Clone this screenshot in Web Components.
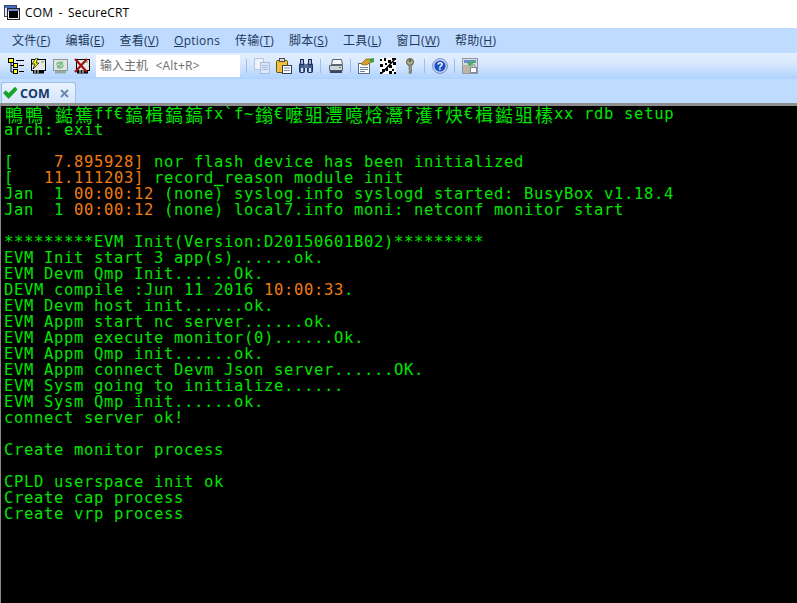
<!DOCTYPE html>
<html>
<head>
<meta charset="utf-8">
<title>COM - SecureCRT</title>
<style>
    html, body { margin: 0; padding: 0; height: 100%; overflow: hidden; background: #000; }
    body { display: flex; flex-direction: column; height: 603px; }
    term-screen { flex: 1; }
</style>
</head>
<body>
<title-bar>COM - SecureCRT</title-bar>
<menu-bar></menu-bar>
<tool-bar></tool-bar>
<tab-strip>COM</tab-strip>
<term-screen></term-screen>

<script>
const UI_FONT = `"Open Sans", "Noto Sans", "Noto Sans CJK SC", sans-serif`;

class TitleBar extends HTMLElement {
    constructor() {
        super();
        this.attachShadow({mode: 'open'}).innerHTML = `
            <style>
                :host {
                    display: flex;
                    align-items: center;
                    gap: 5px;
                    height: 28px;
                    box-sizing: border-box;
                    padding: 0 0 3px 4px;
                    background: #fff;
                    color: #000;
                    font: 12px ${UI_FONT};
                    word-spacing: 2px;
                    letter-spacing: .2px;
                }
                svg { display: block; }
            </style>
            <svg width="16" height="16" viewBox="0 0 16 16">
                <rect x=".5" y=".5" width="12" height="11" fill="#dfe6f2" stroke="#33456e"/>
                <rect x="1" y="1" width="11" height="2" fill="#4a6fb8"/>
                <rect x="3.5" y="3.5" width="12" height="11" fill="#eee" stroke="#222"/>
                <rect x="4" y="4" width="11" height="2" fill="#6c8ccc"/>
                <rect x="5" y="6" width="9" height="7" fill="#000"/>
            </svg>
            <span><slot></slot></span>
        `;
    }
}

class MenuBar extends HTMLElement {
    constructor() {
        super();
        const items = [
            ['文件(', 'F', ')'], ['编辑(', 'E', ')'], ['查看(', 'V', ')'], ['', 'O', 'ptions'],
            ['传输(', 'T', ')'], ['脚本(', 'S', ')'], ['工具(', 'L', ')'], ['窗口(', 'W', ')'], ['帮助(', 'H', ')']
        ];
        this.attachShadow({mode: 'open'}).innerHTML = `
            <style>
                :host {
                    display: flex;
                    align-items: center;
                    gap: 15px;
                    height: 25px;
                    box-sizing: border-box;
                    padding: 0 0 1px 12px;
                    background: #bfdbff;
                    color: #1e395b;
                    font: 12px ${UI_FONT};
                    letter-spacing: .25px;
                }
                u { text-underline-offset: 1px; }
            </style>
            ${items.map(i => `<span>${i[0]}<u>${i[1]}</u>${i[2]}</span>`).join('')}
        `;
    }
}

class ToolIcon extends HTMLElement {
    constructor() {
        super();
        this.attachShadow({mode: 'open'}).innerHTML = `
            <style>
                :host { display: block; width: 16px; height: 16px; flex: none; }
                svg { display: block; }
            </style>
            <svg width="16" height="16" viewBox="0 0 16 16"></svg>
        `;
    }
    set shape(markup) {
        this.shadowRoot.querySelector('svg').innerHTML = markup;
    }
}
customElements.define('tool-icon', ToolIcon);

const ICONS = {
    sessions: `<rect x=".5" y=".5" width="5" height="4" fill="#ff0" stroke="#000"/><rect x="5.5" y="5.5" width="4" height="4" fill="#ff0" stroke="#000"/><rect x="5.5" y="11.5" width="4" height="4" fill="#ff0" stroke="#000"/><path d="M3 5v9h2M3 7.5h2M8 2.5h8M11 7.5h5M11 13.5h5" stroke="#000" fill="none"/>`,
    quick: `<rect x="1.5" y="1.5" width="14" height="11" fill="#e8e8e8" stroke="#000"/><path d="M6 0L2 6h3L3 11l6-6H6l2-5z" fill="#ff0" stroke="#000" stroke-width=".7"/><path d="M11 4h3" stroke="#3b3"/><path d="M3 13h11v2.5H3z" fill="#000"/><path d="M5 12v3M8 12v3" stroke="#fff"/>`,
    reconnect: `<rect x="1.5" y="1.5" width="14" height="11" fill="#dfe5e2" stroke="#8a9a94"/><path d="M4 7a4 4 0 0 1 6-3l1-1v4H7l1-1a2.5 2.5 0 0 0-3 1zM12 7a4 4 0 0 1-6 3l-1 1V7h4L8 8a2.5 2.5 0 0 0 3-1z" fill="#7cc08a"/><path d="M3 13h11v2.5H3z" fill="#9aa8a2"/>`,
    disconnect: `<rect x="2.5" y="1.5" width="13" height="11" fill="#e8e8e8" stroke="#000"/><path d="M11 4h3" stroke="#3b3"/><path d="M3 13h11v2.5H3z" fill="#000"/><path d="M6 12v3M9 12v3" stroke="#fff"/><path d="M1 1l12 13M13 1L1 14" stroke="#a01010" stroke-width="2.2"/>`,
    copy: `<rect x=".5" y=".5" width="9" height="11" fill="#eef3fb" stroke="#b4c4dc"/><rect x="6.5" y="4.5" width="9" height="11" fill="#dbe6f6" stroke="#a9bcdb"/><path d="M8 7.5h6M8 9.5h6M8 11.5h6" stroke="#a9bcdb"/>`,
    paste: `<rect x=".5" y="2.5" width="11" height="12" rx="1" fill="#f0bf3c" stroke="#6b5212"/><rect x="3.5" y=".5" width="5" height="3" fill="#d8dde6" stroke="#4a4a4a"/><rect x="6.5" y="7.5" width="9" height="8" fill="#fff" stroke="#34405a"/><path d="M8 10h6M8 12.5h6" stroke="#7b8aa8"/>`,
    find: `<rect x="1.5" y="5.5" width="5" height="9" rx="1" fill="#3f5c94" stroke="#1e2f55"/><rect x="9.5" y="5.5" width="5" height="9" rx="1" fill="#3f5c94" stroke="#1e2f55"/><rect x="2.5" y="1.5" width="3" height="5" fill="#9fb4d8" stroke="#1e2f55"/><rect x="10.5" y="1.5" width="3" height="5" fill="#9fb4d8" stroke="#1e2f55"/><rect x="6" y="6" width="4" height="4" fill="#5b6f96"/><rect x="3" y="10" width="2" height="4" fill="#d6e0f2"/><rect x="11" y="10" width="2" height="4" fill="#d6e0f2"/>`,
    print: `<path d="M4.5 1.5h9l1 5h-11z" fill="#f4f6f8" stroke="#5c6672"/><path d="M1.5 7.5h13v5h-13z" fill="#cdd3da" stroke="#5c6672"/><path d="M2 12.5h12v2.5H2z" fill="#3c4654"/><path d="M3 7h9" stroke="#5c6672"/><rect x="11" y="9" width="2" height="1" fill="#3a3"/>`,
    options: `<rect x=".5" y="5.5" width="11" height="10" fill="#fff" stroke="#5a6c88"/><path d="M2 9.5h8M2 11.5h8M2 13.5h5" stroke="#6f85a8"/><path d="M3 6l5-5h5l1 2-5 4H5z" fill="#d8a028" stroke="#6a4e10" stroke-width=".6"/><path d="M11 1l5-1v4l-3 1z" fill="#3aa040"/>`,
    map: `<rect x="0" y="0" width="16" height="16" fill="#fff"/><path d="M0 1h2v2H0zM4 0h2v3H4zM0 6h3v3H0zM5 5h2v2H5zM8 2h3v3H8zM12 0h4v2h-4zM13 4h3v3h-3zM9 7h3v3H9zM2 11h3v3H2zM6 10h2v3H6zM12 11h2v2h-2zM0 14h2v2H0zM9 13h3v3H9zM14 14h2v2h-2z" fill="#000"/><path d="M2 15L15 1" stroke="#000" stroke-width="1.5"/>`,
    key: `<circle cx="8" cy="4" r="3.5" fill="#a6ab88" stroke="#5a5e48"/><rect x="6.8" y="1.5" width="2.4" height="2" fill="#4d5040"/><path d="M7 7h2.5v8L8 16l-1-1v-1.5h1V12H7z" fill="#9a9f80" stroke="#5a5e48" stroke-width=".6"/>`,
    help: `<circle cx="8" cy="8" r="7.4" fill="#cfdcf4" stroke="#6f8cc4"/><circle cx="8" cy="8" r="5.6" fill="#1d4fc4"/><text x="8" y="11.6" text-anchor="middle" font-family="Liberation Sans, sans-serif" font-weight="700" font-size="10.5" fill="#fff">?</text>`,
    lock: `<rect x=".5" y=".5" width="15" height="15" fill="#d9dde2" stroke="#8f98a4"/><rect x="2" y="2" width="12" height="3" fill="#6b90c8"/><rect x="1" y="7" width="7" height="8" fill="#c0b4a6"/><path d="M6 5l2 2 4-4" stroke="#3fb64a" stroke-width="2" fill="none"/><rect x="8.5" y="9.5" width="6" height="5" fill="#fff" stroke="#808890"/><path d="M10 9.5V8a1.5 1.5 0 0 1 3 0v1.5" fill="none" stroke="#808890"/>`
};

class ToolBar extends HTMLElement {
    constructor() {
        super();
        this.attachShadow({mode: 'open'}).innerHTML = `
            <style>
                :host {
                    display: flex;
                    align-items: center;
                    height: 26px;
                    padding-left: 8px;
                    background: linear-gradient(#e3efff 0%, #dbe9fe 35%, #afd2ff 100%);
                    font: 12px ${UI_FONT};
                }
                .host-box {
                    width: 144px;
                    height: 22px;
                    box-sizing: border-box;
                    margin: 0 6px 0 0;
                    padding-left: 4px;
                    line-height: 21px;
                    background: #fff;
                    color: #6d6d6d;
                    white-space: pre;
                }
                .host-box span { letter-spacing: .2px; margin-left: 1px; }
                .sep { width: 1px; height: 14px; flex: none; background: #9ebfe4; }
                .group { display: flex; align-items: center; gap: 6px; margin: 0 6px 0 7px; }
                .first { display: flex; gap: 6px; margin-right: 6px; }
            </style>
            <div class="first" data-icons="sessions quick reconnect disconnect"></div>
            <div class="host-box">输入主机 <span> &lt;Alt+R&gt;</span></div>
            <div class="sep"></div>
            <div class="group" data-icons="copy paste find"></div>
            <div class="sep"></div>
            <div class="group" data-icons="print"></div>
            <div class="sep"></div>
            <div class="group" data-icons="options map key"></div>
            <div class="sep"></div>
            <div class="group" data-icons="help"></div>
            <div class="sep"></div>
            <div class="group" data-icons="lock"></div>
        `;
        this.shadowRoot.querySelectorAll('[data-icons]').forEach(box => {
            box.dataset.icons.split(' ').forEach(name => {
                const icon = document.createElement('tool-icon');
                icon.shape = ICONS[name];
                box.appendChild(icon);
            });
        });
    }
}

class TabStrip extends HTMLElement {
    constructor() {
        super();
        this.attachShadow({mode: 'open'}).innerHTML = `
            <style>
                :host {
                    display: flex;
                    align-items: flex-end;
                    height: 27px;
                    box-sizing: border-box;
                    padding-left: 1px;
                    background: #bfdbff;
                    border-bottom: 3px solid;
                    border-image: linear-gradient(#f0f6ff 0 33%, #dfe3e8 33% 66%, #8f8f8f 66%) 3;
                }
                .tab {
                    display: flex;
                    align-items: center;
                    width: 75px;
                    height: 21px;
                    box-sizing: border-box;
                    padding: 0 6px 0 1px;
                    gap: 2px;
                    background: linear-gradient(#e9f2ff, #d6e6fc);
                    border: 1px solid #9dbfe8;
                    border-bottom: 0;
                    border-radius: 3px 3px 0 0;
                    color: #15396b;
                    font: 700 12.5px ${UI_FONT};
                }
                .name { flex: 1; }
                svg { display: block; flex: none; }
            </style>
            <div class="tab">
                <svg width="15" height="14" viewBox="0 0 15 14"><path d="M0 7l2.8-2.8L5.6 7 12 .8 14.6 3.4 5.6 13z" fill="#17a52a"/></svg>
                <span class="name"><slot></slot></span>
                <svg width="9" height="9" viewBox="0 0 9 9"><path d="M1 1l7 7M8 1L1 8" stroke="#6d88ad" stroke-width="1.9"/></svg>
            </div>
        `;
    }
}

const CJK_LINE = '鴨鴨`鐑篶ff€鎬楫鎬鎬fx`f~鎓€嚒驵灃噫焓灊f濩f炔€楫鐑驵榡xx rdb setup';

const TERM_LINES = [
    CJK_LINE,
    'arch: exit',
    '',
    '[    <b>7.895928]</b> nor flash device has been initialized',
    '[   <b>11.111203]</b> record<em>_</em>reason module init',
    'Jan  1 <b>00:00:12</b> (none) syslog.info syslogd started: BusyBox v1.18.4',
    'Jan  1 <b>00:00:12</b> (none) local7.info moni: netconf monitor start',
    '',
    '*********EVM Init(Version:D20150601B02)*********',
    'EVM Init start 3 app(s)......ok.',
    'EVM Devm Qmp Init......Ok.',
    'DEVM compile :Jun 11 2016 <b>10:00:33</b>.',
    'EVM Devm host init......ok.',
    'EVM Appm start nc server......ok.',
    'EVM Appm execute monitor(0)......Ok.',
    'EVM Appm Qmp init......ok.',
    'EVM Appm connect Devm Json server......OK.',
    'EVM Sysm going to initialize......',
    'EVM Sysm Qmp init......ok.',
    'connect server ok!',
    '',
    'Create monitor process',
    '',
    'CPLD userspace init ok',
    'Create cap process',
    'Create vrp process'
];

class TermScreen extends HTMLElement {
    constructor() {
        super();
        const html = TERM_LINES.map((line, n) => {
            if (n === 0) {
                // wide chars take two cells
                const cells = [...line].map(c => c.charCodeAt(0) > 0x2e80
                    ? `<i>${c}</i>` : c).join('');
                return `<div class="line">${cells}</div>`;
            }
            return `<div class="line">${line}</div>`;
        }).join('');
        this.attachShadow({mode: 'open'}).innerHTML = `
            <style>
                :host {
                    display: block;
                    box-sizing: border-box;
                    padding: 0 0 0 3px;
                    background: #000;
                    border-left: 1px solid #8a8a8a;
                    color: #00e400;
                    font: 15.5px "DejaVu Sans Mono", "Noto Sans CJK SC", monospace;
                    letter-spacing: .67px;
                    overflow: hidden;
                }
                .line { height: 16px; line-height: 16px; white-space: pre; }
                b { font-weight: 400; color: #f07c10; }
                em { font-style: normal; font-weight: 700; }
                i { display: inline-block; vertical-align: top; width: 20px; height: 16px; letter-spacing: 0; font-style: normal; font-size: 18px; text-align: center; font-family: "Noto Sans CJK SC", sans-serif; line-height: 16px; }
            </style>
            ${html}
        `;
    }
}

customElements.define('title-bar', TitleBar);
customElements.define('menu-bar', MenuBar);
customElements.define('tool-bar', ToolBar);
customElements.define('tab-strip', TabStrip);
customElements.define('term-screen', TermScreen);
</script>
</body>
</html>
